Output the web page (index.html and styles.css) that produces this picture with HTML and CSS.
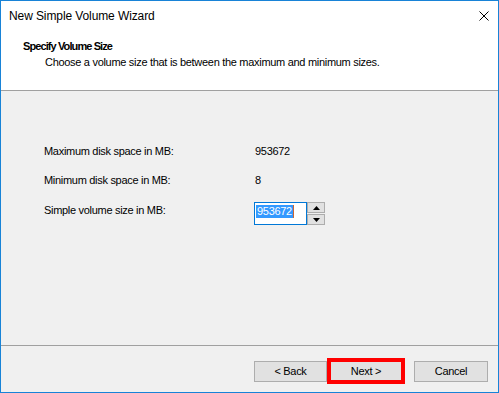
FILE: index.html
```html
<!DOCTYPE html>
<html>
<head>
<meta charset="utf-8">
<link rel="stylesheet" href="styles.css">
</head>
<body>
<div class="window">
  <div class="titlebar">
    <span class="title">New Simple Volume Wizard</span>
    <svg class="close" width="10" height="10" viewBox="0 0 10 10"><path d="M0.5 0.5 L9.5 9.5 M9.5 0.5 L0.5 9.5" stroke="#000" stroke-width="1" fill="none"/></svg>
  </div>
  <div class="header">
    <div class="h-title">Specify Volume Size</div>
    <div class="h-sub">Choose a volume size that is between the maximum and minimum sizes.</div>
  </div>
  <div class="content">
    <div class="form">
      <div class="label">Maximum disk space in MB:</div>
      <div class="value">953672</div>
      <div class="label">Minimum disk space in MB:</div>
      <div class="value">8</div>
      <div class="label label-input">Simple volume size in MB:</div>
      <div class="spin">
        <div class="field"><span class="sel">953672</span><span class="caret"></span></div>
        <div class="arrows">
          <div class="arrow"><svg width="7" height="4" viewBox="0 0 7 4"><path d="M3.5 0 L7 4 L0 4 Z" fill="#000"/></svg></div>
          <div class="arrow"><svg width="7" height="4" viewBox="0 0 7 4"><path d="M0 0 L7 0 L3.5 4 Z" fill="#000"/></svg></div>
        </div>
      </div>
    </div>
  </div>
  <div class="footer">
    <div class="btn btn-back">&lt; Back</div>
    <div class="btn btn-next">Next &gt;</div>
    <div class="btn btn-cancel">Cancel</div>
  </div>
</div>
</body>
</html>
```
FILE: styles.css
```css
html, body {
  margin: 0;
  padding: 0;
  background: #ffffff;
}
.window {
  width: 499px;
  height: 393px;
  box-sizing: border-box;
  border: 1px solid #1883d7;
  display: flex;
  flex-direction: column;
  font-family: "Liberation Sans", Arial, sans-serif;
  font-size: 11px;
  line-height: 13px;
  letter-spacing: -0.3px;
  color: #000;
  background: #f0f0f0;
}
.titlebar {
  height: 29px;
  flex: none;
  background: #fff;
  display: flex;
  align-items: center;
  justify-content: space-between;
  padding: 0 9px 0 8px;
}
.title {
  font-size: 12px;
  line-height: 16px;
  letter-spacing: -0.1px;
  padding-top: 1px;
}
.close {
  display: block;
}
.header {
  flex: none;
  box-sizing: border-box;
  background: #fff;
  border-bottom: 1px solid #a0a0a0;
  height: 61px;
  padding-top: 10px;
}
.h-title {
  font-weight: bold;
  letter-spacing: -0.9px;
  padding-left: 22px;
}
.h-sub {
  margin-top: 3px;
  padding-left: 44px;
}
.content {
  flex: 1;
  padding: 54px 0 0 43px;
}
.form {
  display: grid;
  grid-template-columns: 210px auto;
  grid-template-rows: 13px 13px 23px;
  row-gap: 16px;
  column-gap: 0;
}
.form > .value {
  padding-left: 1px;
}
.label-input {
  margin-top: 1px;
}
.spin {
  display: flex;
  margin-top: -1px;
}
.field {
  width: 53px;
  height: 23px;
  box-sizing: border-box;
  border: 1px solid #0078d7;
  background: #fff;
  padding: 2px 0 0 1px;
  display: flex;
  align-items: flex-start;
}
.sel {
  background: #3399ff;
  color: #fff;
  line-height: 13px;
  padding: 0 1px;
}
.caret {
  width: 1px;
  height: 13px;
  background: #cc6633;
}
.arrows {
  display: flex;
  flex-direction: column;
  gap: 1px;
}
.arrow {
  width: 18px;
  height: 11px;
  box-sizing: border-box;
  border: 1px solid #adadad;
  background: #e1e1e1;
  display: flex;
  align-items: center;
  justify-content: center;
}
.arrow svg {
  display: block;
}
.footer {
  flex: none;
  border-top: 1px solid #a0a0a0;
  display: flex;
  justify-content: flex-end;
  align-items: center;
  padding: 12px 10px 8px 0;
  box-sizing: content-box;
  height: 26px;
}
.btn {
  box-sizing: border-box;
  height: 21px;
  border: 1px solid #adadad;
  background: #e1e1e1;
  display: flex;
  align-items: center;
  justify-content: center;
}
.btn-back {
  width: 73px;
}
.btn-next {
  width: 78px;
  height: 26px;
  border: 4px solid #ff0000;
}
.btn-cancel {
  width: 74px;
  margin-left: 9px;
}
```
